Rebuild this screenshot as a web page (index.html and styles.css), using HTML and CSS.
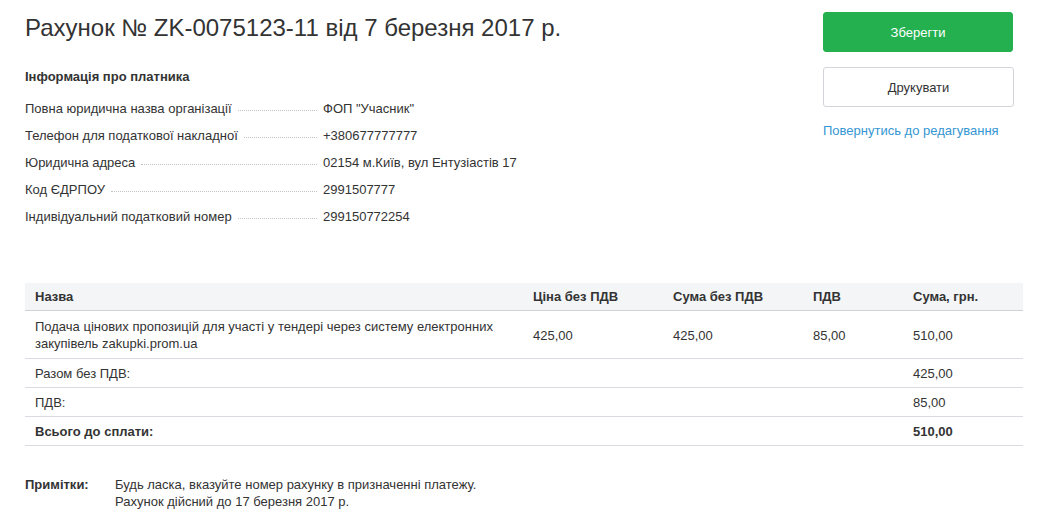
FILE: index.html
```html
<!DOCTYPE html>
<html lang="uk">
<head>
<meta charset="utf-8">
<title>Рахунок</title>
<link rel="stylesheet" href="styles.css">
</head>
<body>
<div class="page">
  <div class="top">
    <div class="main">
      <h1 class="title">Рахунок № ZK-0075123-11 від 7 березня 2017 р.</h1>
      <h2 class="section-title">Інформація про платника</h2>
      <div class="info">
        <div class="info-row"><div class="label"><span>Повна юридична назва організації</span><span class="leader"></span></div><div class="value">ФОП "Учасник"</div></div>
        <div class="info-row"><div class="label"><span>Телефон для податкової накладної</span><span class="leader"></span></div><div class="value">+380677777777</div></div>
        <div class="info-row"><div class="label"><span>Юридична адреса</span><span class="leader"></span></div><div class="value">02154 м.Київ, вул Ентузіастів 17</div></div>
        <div class="info-row"><div class="label"><span>Код ЄДРПОУ</span><span class="leader"></span></div><div class="value">2991507777</div></div>
        <div class="info-row"><div class="label"><span>Індивідуальний податковий номер</span><span class="leader"></span></div><div class="value">299150772254</div></div>
      </div>
    </div>
    <div class="actions">
      <button class="btn btn-save">Зберегти</button>
      <button class="btn btn-print">Друкувати</button>
      <a class="back-link" href="#">Повернутись до редагування</a>
    </div>
  </div>

  <table class="items">
    <thead>
      <tr>
        <th class="c-name">Назва</th>
        <th class="c-price">Ціна без ПДВ</th>
        <th class="c-sum">Сума без ПДВ</th>
        <th class="c-vat">ПДВ</th>
        <th class="c-total">Сума, грн.</th>
      </tr>
    </thead>
    <tbody>
      <tr class="item">
        <td>Подача цінових пропозицій для участі у тендері через систему електронних закупівель zakupki.prom.ua</td>
        <td>425,00</td>
        <td>425,00</td>
        <td>85,00</td>
        <td>510,00</td>
      </tr>
      <tr>
        <td>Разом без ПДВ:</td><td></td><td></td><td></td><td>425,00</td>
      </tr>
      <tr>
        <td>ПДВ:</td><td></td><td></td><td></td><td>85,00</td>
      </tr>
      <tr class="grand">
        <td>Всього до сплати:</td><td></td><td></td><td></td><td>510,00</td>
      </tr>
    </tbody>
  </table>

  <div class="notes">
    <div class="notes-label">Примітки:</div>
    <div class="notes-text">Будь ласка, вказуйте номер рахунку в призначенні платежу.<br>Рахунок дійсний до 17 березня 2017 р.</div>
  </div>
</div>
</body>
</html>
```

FILE: styles.css
```css
html, body {
  margin: 0;
  padding: 0;
  background: #ffffff;
}

body {
  font-family: "Liberation Sans", Arial, sans-serif;
  font-size: 13px;
  line-height: 17px;
  color: #333333;
}

.page {
  padding: 0 19px 0 25px;
}

.top {
  display: flex;
  justify-content: space-between;
  align-items: flex-start;
}

.title {
  margin: 14px 0 0;
  font-size: 24px;
  line-height: 28px;
  font-weight: normal;
  color: #333333;
}

.section-title {
  margin: 26px 0 0;
  font-size: 13px;
  line-height: 17px;
  font-weight: bold;
  color: #333333;
}

.info {
  margin-top: 15px;
  display: flex;
  flex-direction: column;
  gap: 10px;
}

.info-row {
  display: flex;
  align-items: baseline;
}

.label {
  width: 292px;
  display: flex;
  align-items: baseline;
}

.leader {
  flex: 1;
  margin-left: 6px;
  border-bottom: 1px dotted #c4c4c4;
  position: relative;
  top: -2px;
}

.value {
  margin-left: 6px;
}

.actions {
  width: 191px;
  margin-top: 12px;
  margin-right: 9px;
  display: flex;
  flex-direction: column;
}

.btn {
  display: block;
  width: 100%;
  height: 40px;
  border-radius: 3px;
  font-family: "Liberation Sans", Arial, sans-serif;
  font-size: 13px;
  cursor: pointer;
}

.btn-save {
  width: 190px;
  background: #24b04f;
  border: 1px solid #24b04f;
  color: #ffffff;
}

.btn-print {
  margin-top: 15px;
  background: #ffffff;
  border: 1px solid #d1d4d9;
  color: #333333;
}

.back-link {
  margin-top: 15px;
  color: #3596d3;
  text-decoration: none;
}

.items {
  margin-top: 58px;
  width: 998px;
  border-collapse: collapse;
}

.items th,
.items td {
  text-align: left;
  vertical-align: middle;
  padding: 6px 10px 5px;
  border-bottom: 1px solid #d8dbe0;
}

.items .item td {
  padding: 7px 10px 6px;
}

.items th {
  background: #f4f5f7;
  font-weight: bold;
  padding: 5px 10px 5px;
  border-bottom: 1px solid #cfd2d7;
}

.items .c-name { width: 478px; }
.items .c-price { width: 120px; }
.items .c-sum { width: 120px; }
.items .c-vat { width: 80px; }

.grand td {
  font-weight: bold;
}

.notes {
  margin-top: 30px;
  display: flex;
}

.notes-label {
  width: 90px;
  font-weight: bold;
}
```
